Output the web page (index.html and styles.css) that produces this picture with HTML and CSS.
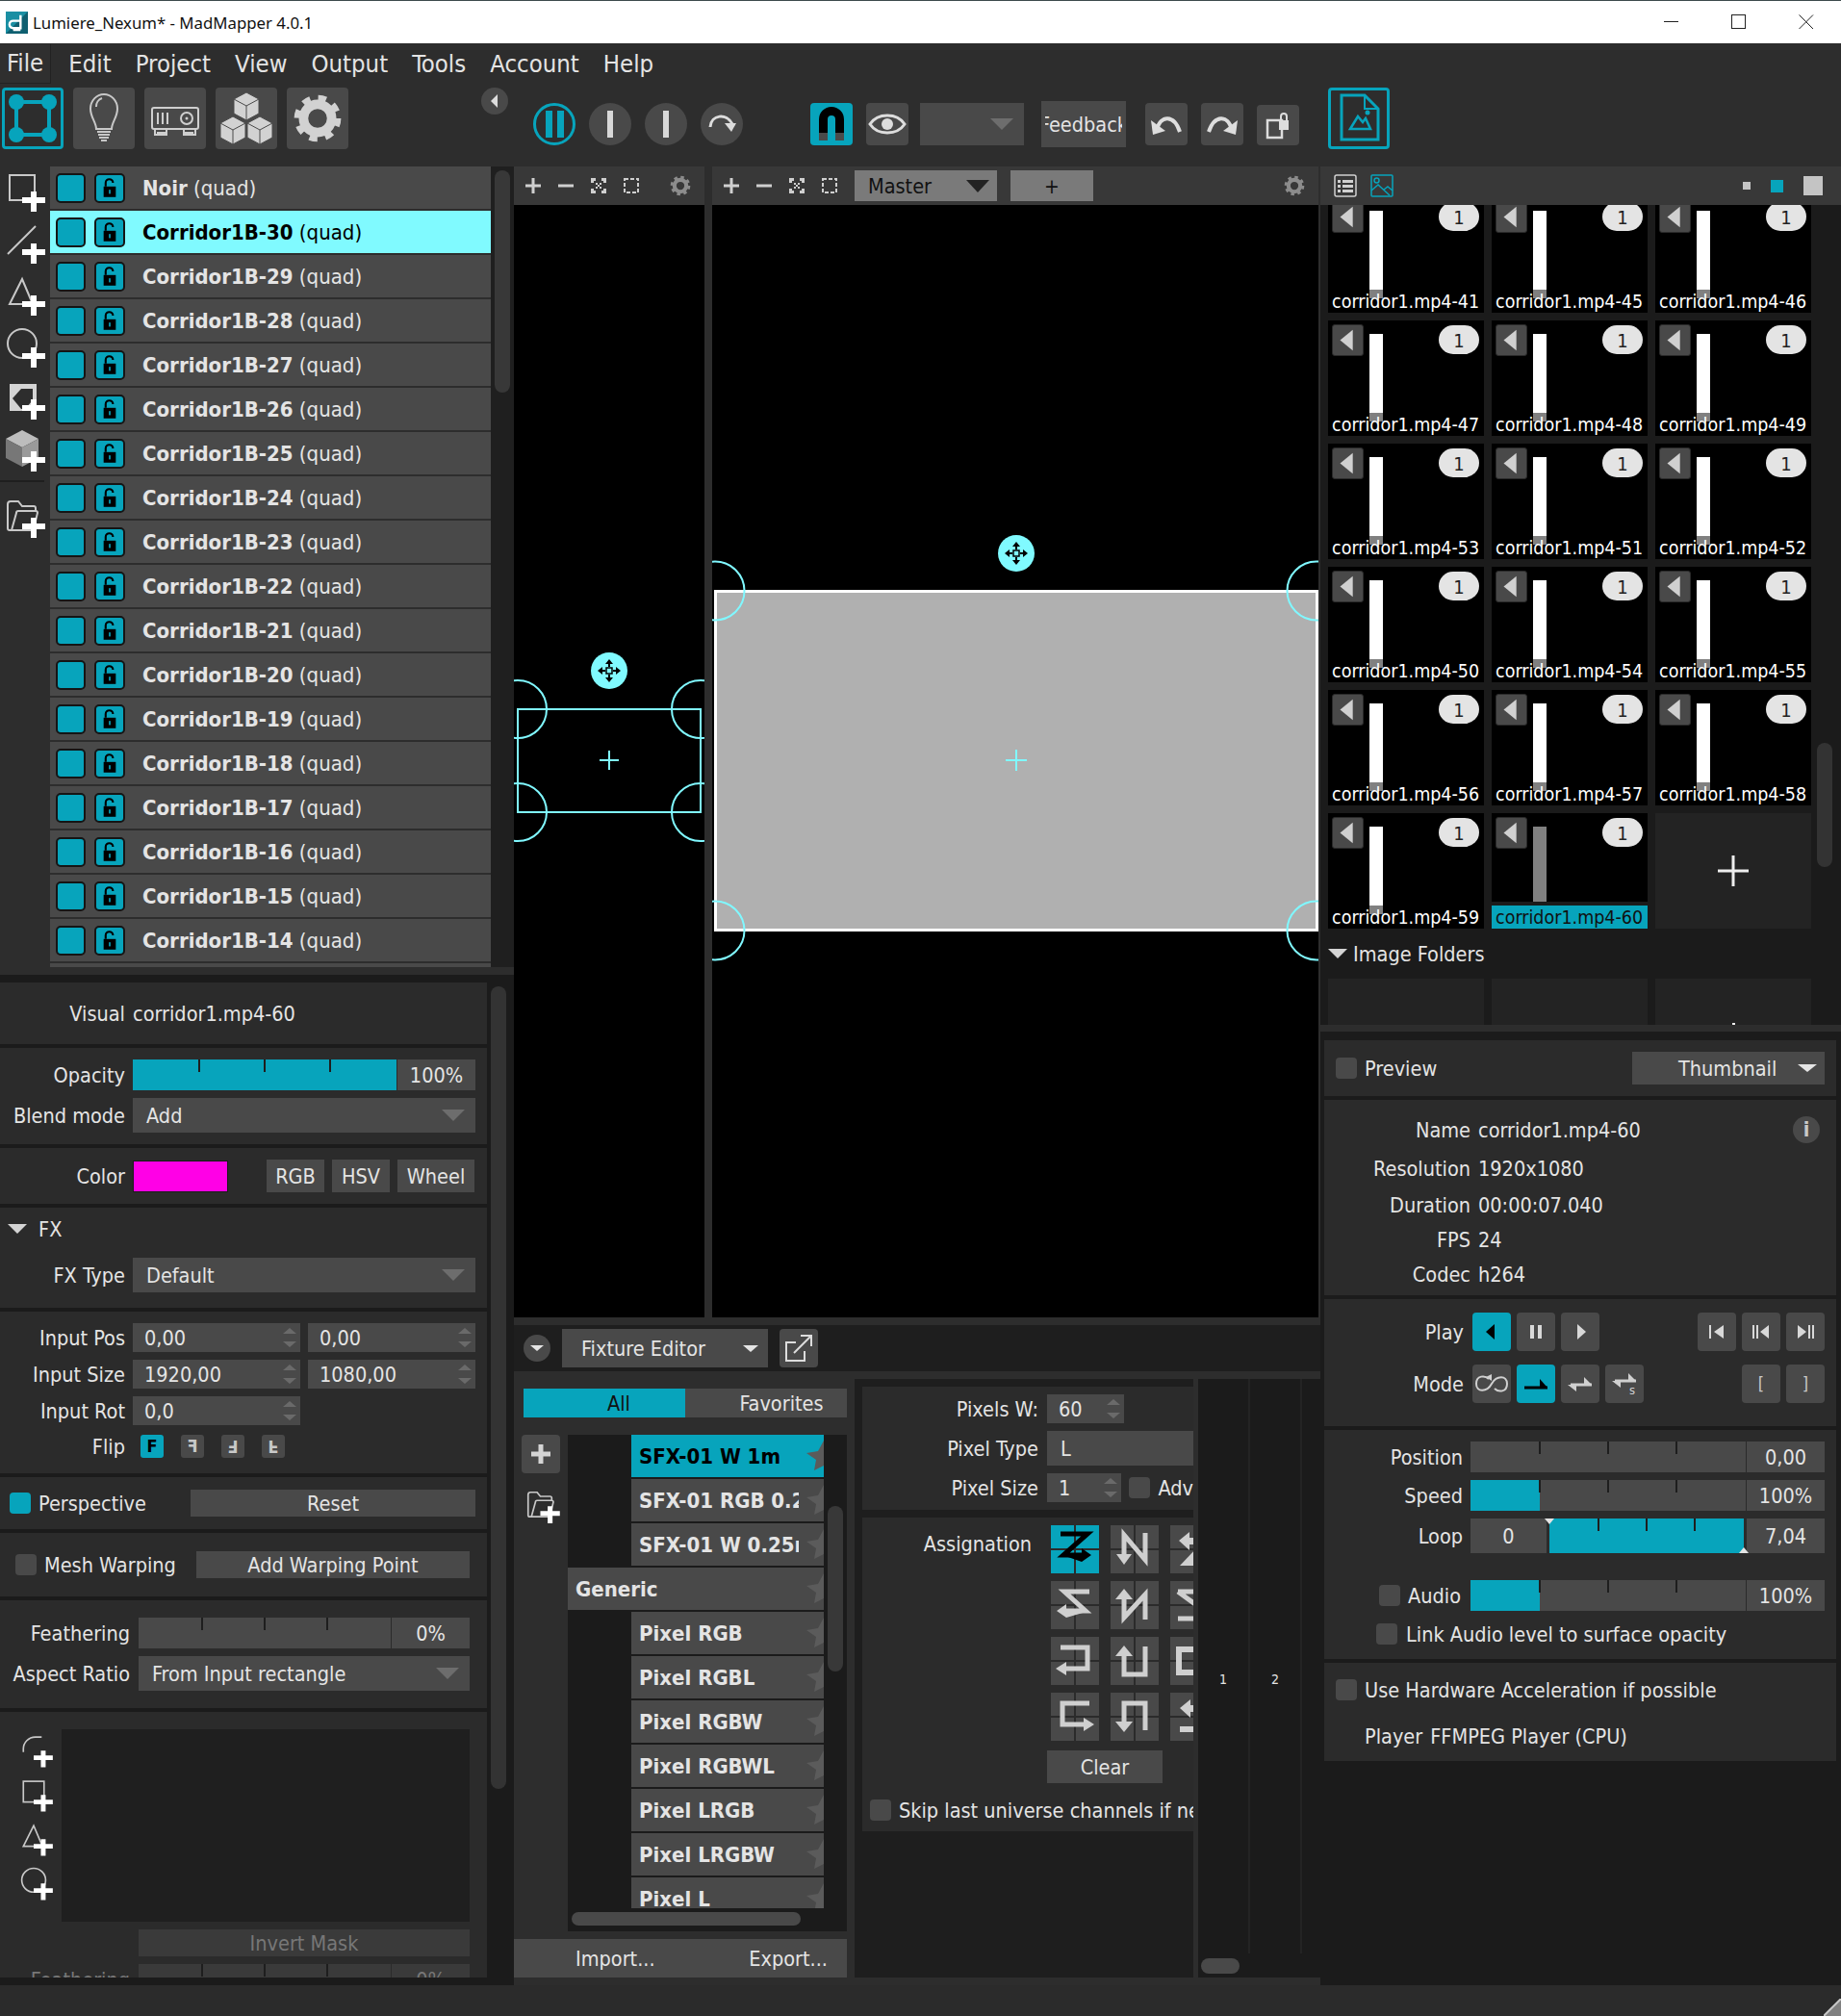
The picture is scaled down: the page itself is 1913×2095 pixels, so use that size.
FILE: index.html
```html
<!DOCTYPE html>
<html>

<head>
  <title>Lumiere_Nexum* - MadMapper 4.0.1</title>
  <link rel="stylesheet" href="styles.css">
</head>

<body>
  <svg class="defs" xmlns="http://www.w3.org/2000/svg">
    <symbol id="plus" viewBox="0 0 52 54"><path d="M32 26h6v6h9v6h-9v9h-6v-9h-9v-6h9z" fill="#fff"/></symbol>
    <symbol id="t-quad" viewBox="0 0 52 54"><rect x="10" y="9" width="26" height="26" fill="none" stroke="#c8c8c8" stroke-width="2"/><use href="#plus" width="52" height="54"/></symbol>
    <symbol id="t-line" viewBox="0 0 52 54"><path d="M8 37L37 8" stroke="#c8c8c8" stroke-width="2"/><use href="#plus" width="52" height="54"/></symbol>
    <symbol id="t-tri" viewBox="0 0 52 54"><path d="M23 9L10 35H34z" fill="none" stroke="#c8c8c8" stroke-width="2"/><use href="#plus" width="52" height="54"/></symbol>
    <symbol id="t-circle" viewBox="0 0 52 54"><circle cx="23" cy="22" r="15" fill="none" stroke="#c8c8c8" stroke-width="2"/><use href="#plus" width="52" height="54"/></symbol>
    <symbol id="t-poly" viewBox="0 0 52 54"><path d="M10 10H38V38H10z" fill="#d4d4d4"/><path d="M13 25L22 15H34V27L26 36H22z" fill="#2d2d2d"/><use href="#plus" width="52" height="54"/></symbol>
    <symbol id="t-cube" viewBox="0 0 52 54"><path d="M23 4L40 13 23 22 6 13z" fill="#bdbdbd"/><path d="M6 13L23 22V42L6 33z" fill="#777"/><path d="M40 13L23 22V42L40 33z" fill="#9a9a9a"/><use href="#plus" width="52" height="54"/></symbol>
    <symbol id="t-folder" viewBox="0 0 52 54"><path d="M12 39H10a2 2 0 0 1-2-2V12a3 3 0 0 1 3-3h8l4 5h12a2 2 0 0 1 2 2v3M12 39L17 21a2 2 0 0 1 2-2h18a2 2 0 0 1 2 2l-4 16a2 2 0 0 1-2 2z" fill="none" stroke="#c8c8c8" stroke-width="2"/><use href="#plus" width="52" height="54"/></symbol>
    <symbol id="t-curve" viewBox="0 0 52 54"><path d="M10 28V24A15 15 0 0 1 25 9H33" fill="none" stroke="#c8c8c8" stroke-width="2"/><use href="#plus" width="52" height="54"/></symbol>
    <symbol id="lock" viewBox="0 0 32 32"><rect x="8.500" y="14" width="15" height="13" fill="#000"/><path d="M11 14V9.500a4.500 4.500 0 0 1 9 0" fill="none" stroke="#000" stroke-width="2.500"/><rect x="15" y="18" width="2" height="5" fill="#07a4bc"/></symbol>
    <symbol id="gear" viewBox="0 0 48 48"><circle cx="24" cy="24" r="19" fill="none" stroke="currentColor" stroke-width="7" stroke-dasharray="7.460 7.460"/><circle cx="24" cy="24" r="13.500" fill="none" stroke="currentColor" stroke-width="9"/></symbol>
    <symbol id="fit" viewBox="0 0 16 16"><path d="M0 0h5v3H3v2H0zM11 0h5v5h-3V3h-2zM0 11h3v2h2v3H0zM13 11h3v5h-5v-3h2zM5 5h2v2H5zM9 5h2v2H9zM7 7h2v2H7zM5 9h2v2H5zM9 9h2v2H9z" fill="#cfcfcf"/></symbol>
    <symbol id="dash" viewBox="0 0 16 16"><rect x="1" y="1" width="14" height="14" fill="none" stroke="#cfcfcf" stroke-width="2" stroke-dasharray="4 2"/></symbol>
    <symbol id="updown" viewBox="0 0 14 24"><path d="M0 8L7 2l7 6zM0 16l7 6 7-6z" fill="#6a6a6a"/></symbol>
    <symbol id="back" viewBox="0 0 33 33"><path d="M8 16.500L22 5v23z" fill="#d0d0d0"/></symbol>
    <symbol id="star" viewBox="0 0 18 32"><path d="M18 0V26L8 31 10 20 0 13l12-2z" fill="#5b5b5b"/></symbol>
    <symbol id="a1" viewBox="0 0 50 50"><path d="M10 9H38L13 31H36" fill="none" stroke="currentColor" stroke-width="5"/><path d="M12 31H32V24L42 31 32 38z" fill="currentColor"/></symbol>
    <symbol id="a2" viewBox="0 0 50 50"><path d="M14 34V10L36 36V8" fill="none" stroke="currentColor" stroke-width="5"/><path d="M6 30H22L14 41z" fill="currentColor"/></symbol>
    <symbol id="a3" viewBox="0 0 50 50"><path d="M40 11H14L36 31H12" fill="none" stroke="currentColor" stroke-width="5"/><path d="M40 31H16V24L6 31 16 38z" fill="currentColor"/></symbol>
    <symbol id="a4" viewBox="0 0 50 50"><path d="M14 16V38L36 14V40" fill="none" stroke="currentColor" stroke-width="5"/><path d="M5 19H23L14 8z" fill="currentColor"/></symbol>
    <symbol id="a5" viewBox="0 0 50 50"><path d="M10 11H38V33H14" fill="none" stroke="currentColor" stroke-width="5"/><path d="M16 26V40L5 33z" fill="currentColor"/></symbol>
    <symbol id="a6" viewBox="0 0 50 50"><path d="M14 17V39H36V10" fill="none" stroke="currentColor" stroke-width="5"/><path d="M5 20H23L14 9z" fill="currentColor"/></symbol>
    <symbol id="a7" viewBox="0 0 50 50"><path d="M40 11H12V33H36" fill="none" stroke="currentColor" stroke-width="5"/><path d="M34 26V40L45 33z" fill="currentColor"/></symbol>
    <symbol id="a8" viewBox="0 0 50 50"><path d="M14 33V11H36V39" fill="none" stroke="currentColor" stroke-width="5"/><path d="M5 30H23L14 41z" fill="currentColor"/></symbol>
    <symbol id="a9" viewBox="0 0 50 50"><path d="M9 16L20 7V13H40V20H20V26z" fill="currentColor"/><path d="M10 42L26 25V42z" fill="currentColor"/></symbol>
    <symbol id="a10" viewBox="0 0 50 50"><path d="M8 11H50M8 11L34 30M8 39H50" fill="none" stroke="currentColor" stroke-width="5"/></symbol>
    <symbol id="a11" viewBox="0 0 50 50"><path d="M42 13H9V37H42" fill="none" stroke="currentColor" stroke-width="6"/></symbol>
    <symbol id="a12" viewBox="0 0 50 50"><path d="M10 16L21 7V13H40V20H21V26z" fill="currentColor"/><rect x="10" y="35" width="36" height="6" fill="currentColor"/></symbol>
    <symbol id="move" viewBox="0 0 24 24"><path d="M12 0l4 5h-3v3h-2V5H8zM12 24l-4-5h3v-3h2v3h3zM0 12l5-4v3h3v2H5v3zM24 12l-5 4v-3h-3v-2h3V8z" fill="#000"/><rect x="9" y="9" width="6" height="6" fill="none" stroke="#000" stroke-width="1.500"/></symbol>
  </svg>

  <div class="window">
    <header class="titlebar">
      <svg class="app-icon" viewBox="0 0 24 24"><rect width="24" height="24" fill="#0e5f70"/><path d="M0 24V0h24L0 24z" fill="#1a8fa3"/><path d="M16 4v14h-8a4 4 0 0 1 0-8h8M8 20h8" fill="none" stroke="#fff" stroke-width="2.500"/></svg>
      <span class="app-title">Lumiere_Nexum* - MadMapper 4.0.1</span>
      <div class="win-controls">
        <svg width="16" height="16" viewBox="0 0 16 16"><path d="M0 7.500H15" stroke="#222"/></svg>
        <svg width="16" height="16" viewBox="0 0 16 16"><rect x="0.500" y="0.500" width="14" height="14" fill="none" stroke="#222"/></svg>
        <svg width="16" height="16" viewBox="0 0 16 16"><path d="M0.500 0.500L15 15M15 0.500L0.500 15" stroke="#222"/></svg>
      </div>
    </header>

    <nav class="menubar">
      <span class="menu-item menu-file">File</span>
      <span class="menu-item">Edit</span>
      <span class="menu-item">Project</span>
      <span class="menu-item">View</span>
      <span class="menu-item">Output</span>
      <span class="menu-item">Tools</span>
      <span class="menu-item">Account</span>
      <span class="menu-item">Help</span>
    </nav>

    <div class="toolbar">
      <div class="tool-modes">
        <button class="mode-btn mode-on">
          <svg viewBox="0 0 58 58" width="58" height="58"><path d="M12 12H46V46H12z" fill="none" stroke="#07a4bc" stroke-width="4"/><circle cx="12" cy="12" r="8" fill="#07a4bc"/><circle cx="46" cy="12" r="8" fill="#07a4bc"/><circle cx="12" cy="46" r="8" fill="#07a4bc"/><circle cx="46" cy="46" r="8" fill="#07a4bc"/></svg>
        </button>
        <button class="mode-btn">
          <svg viewBox="0 0 64 64" width="64" height="64"><path d="M24 43C24 36 18 31 18 22A14 15 0 0 1 46 22C46 31 40 36 40 43z" fill="none" stroke="#c8c8c8" stroke-width="2"/><path d="M25 46H39M26 49H38M27 52H37M29 55H35" stroke="#c8c8c8" stroke-width="2"/><path d="M24 20a9 9 0 0 1 6-9" fill="none" stroke="#c8c8c8" stroke-width="2"/></svg>
        </button>
        <button class="mode-btn">
          <svg viewBox="0 0 64 64" width="64" height="64"><rect x="8" y="21" width="48" height="22" rx="2" fill="none" stroke="#cfcfcf" stroke-width="2"/><path d="M13 47H22M42 47H51M11 43v6h12v-6M41 43v6h12v-6" fill="none" stroke="#cfcfcf" stroke-width="2"/><path d="M14 26V38M19 26V38M24 26V38" stroke="#cfcfcf" stroke-width="2"/><circle cx="44" cy="32" r="6" fill="none" stroke="#cfcfcf" stroke-width="2"/><circle cx="44" cy="32" r="1.500" fill="#cfcfcf"/></svg>
        </button>
        <button class="mode-btn">
          <svg viewBox="0 0 64 64" width="64" height="64"><g fill="#d2d2d2" stroke="#4a4a4a" stroke-width="1"><path d="M32 5L45 12V27L32 34 19 27V12z"/><path d="M18 30L31 37V52L18 59 5 52V37z"/><path d="M46 30L59 37V52L46 59 33 52V37z"/></g><path d="M19 12L32 19 45 12M32 19V34M5 37L18 44 31 37M18 44V59M33 37L46 44 59 37M46 44V59" fill="none" stroke="#4a4a4a" stroke-width="1"/></svg>
        </button>
        <button class="mode-btn">
          <svg class="gear-large" viewBox="0 0 48 48" width="52" height="52"><use href="#gear" width="48" height="48"/></svg>
        </button>
      </div>

      <button class="collapse-btn"><svg viewBox="0 0 8 14" width="8" height="14"><path d="M7 0V14L0 7z" fill="#ddd"/></svg></button>

      <div class="transport">
        <button class="round-btn round-on"><span class="bar bar-teal"></span><span class="bar bar-teal"></span></button>
        <button class="round-btn"><span class="bar"></span></button>
        <button class="round-btn"><span class="bar"></span></button>
        <button class="round-btn">
          <svg viewBox="0 0 32 32" width="32" height="32"><path d="M4 19C5 6 21 4 27 16" fill="none" stroke="#ddd" stroke-width="3"/><path d="M19 15H31L26 24z" fill="#ddd"/></svg>
        </button>
      </div>

      <button class="square-btn square-on magnet-btn">
        <svg viewBox="0 0 32 38" width="32" height="38"><path d="M3 28V14a13 13 0 0 1 26 0V28H20V14a4 4 0 0 0-8 0V28z" fill="#000"/><path d="M3 28H12V36H3zM20 28H29V36H20z" fill="#4a4a4a"/></svg>
      </button>
      <button class="square-btn eye-btn">
        <svg viewBox="0 0 40 28" width="40" height="28"><path d="M2 14C10 2 30 2 38 14 30 26 10 26 2 14z" fill="none" stroke="#ddd" stroke-width="3"/><circle cx="20" cy="14" r="6" fill="#ddd"/></svg>
      </button>
      <div class="blank-combo"><i class="caret caret-big"></i></div>
      <div class="feedback-btn"><span>Feedback</span></div>
      <button class="square-btn undo-btn">
        <svg viewBox="0 0 36 28" width="36" height="28"><path d="M8 20C12 4 26 4 32 22" fill="none" stroke="#ddd" stroke-width="4"/><path d="M2 10L4 25 17 21z" fill="#ddd"/></svg>
      </button>
      <button class="square-btn redo-btn">
        <svg viewBox="0 0 36 28" width="36" height="28"><path d="M4 22C10 4 24 4 28 20" fill="none" stroke="#ddd" stroke-width="4"/><path d="M34 10L32 25 19 21z" fill="#ddd"/></svg>
      </button>
      <button class="square-btn lock-copy-btn">
        <svg viewBox="0 0 32 32" width="32" height="32"><rect x="5" y="11" width="15" height="18" fill="none" stroke="#ddd" stroke-width="2.500"/><rect x="17" y="11" width="10" height="10" fill="#ddd"/><path d="M19 11V7a3 3 0 0 1 6 0v4" fill="none" stroke="#ddd" stroke-width="2"/></svg>
      </button>
      <button class="mode-btn mode-on media-btn">
        <svg viewBox="0 0 48 58" width="48" height="58"><path d="M6 5H30L44 19V51H6z" fill="none" stroke="#07a4bc" stroke-width="3"/><path d="M30 5V19H44" fill="none" stroke="#07a4bc" stroke-width="2"/><path d="M15 40L23 27 28 33 31 29 36 40z" fill="none" stroke="#07a4bc" stroke-width="2.500"/><circle cx="33" cy="23" r="2.500" fill="#07a4bc"/></svg>
      </button>
    </div>

    <main class="main">
      <aside class="col-left">
        <div class="surfaces">
          <div class="rail">
            <svg class="rail-icon"><use href="#t-quad"/></svg>
            <svg class="rail-icon"><use href="#t-line"/></svg>
            <svg class="rail-icon"><use href="#t-tri"/></svg>
            <svg class="rail-icon"><use href="#t-circle"/></svg>
            <svg class="rail-icon"><use href="#t-poly"/></svg>
            <svg class="rail-icon"><use href="#t-cube"/></svg>
            <hr class="rail-sep">
            <svg class="rail-icon"><use href="#t-folder"/></svg>
          </div>
          <div class="surface-list">
            <div class="surface"><i class="swatch"></i><i class="swatch lockbox"><svg viewBox="0 0 32 32"><use href="#lock"/></svg></i><span class="surface-name"><b>Noir</b> (quad)</span></div>
            <div class="surface surface-on"><i class="swatch"></i><i class="swatch lockbox"><svg viewBox="0 0 32 32"><use href="#lock"/></svg></i><span class="surface-name"><b>Corridor1B-30</b> (quad)</span></div>
            <div class="surface"><i class="swatch"></i><i class="swatch lockbox"><svg viewBox="0 0 32 32"><use href="#lock"/></svg></i><span class="surface-name"><b>Corridor1B-29</b> (quad)</span></div>
            <div class="surface"><i class="swatch"></i><i class="swatch lockbox"><svg viewBox="0 0 32 32"><use href="#lock"/></svg></i><span class="surface-name"><b>Corridor1B-28</b> (quad)</span></div>
            <div class="surface"><i class="swatch"></i><i class="swatch lockbox"><svg viewBox="0 0 32 32"><use href="#lock"/></svg></i><span class="surface-name"><b>Corridor1B-27</b> (quad)</span></div>
            <div class="surface"><i class="swatch"></i><i class="swatch lockbox"><svg viewBox="0 0 32 32"><use href="#lock"/></svg></i><span class="surface-name"><b>Corridor1B-26</b> (quad)</span></div>
            <div class="surface"><i class="swatch"></i><i class="swatch lockbox"><svg viewBox="0 0 32 32"><use href="#lock"/></svg></i><span class="surface-name"><b>Corridor1B-25</b> (quad)</span></div>
            <div class="surface"><i class="swatch"></i><i class="swatch lockbox"><svg viewBox="0 0 32 32"><use href="#lock"/></svg></i><span class="surface-name"><b>Corridor1B-24</b> (quad)</span></div>
            <div class="surface"><i class="swatch"></i><i class="swatch lockbox"><svg viewBox="0 0 32 32"><use href="#lock"/></svg></i><span class="surface-name"><b>Corridor1B-23</b> (quad)</span></div>
            <div class="surface"><i class="swatch"></i><i class="swatch lockbox"><svg viewBox="0 0 32 32"><use href="#lock"/></svg></i><span class="surface-name"><b>Corridor1B-22</b> (quad)</span></div>
            <div class="surface"><i class="swatch"></i><i class="swatch lockbox"><svg viewBox="0 0 32 32"><use href="#lock"/></svg></i><span class="surface-name"><b>Corridor1B-21</b> (quad)</span></div>
            <div class="surface"><i class="swatch"></i><i class="swatch lockbox"><svg viewBox="0 0 32 32"><use href="#lock"/></svg></i><span class="surface-name"><b>Corridor1B-20</b> (quad)</span></div>
            <div class="surface"><i class="swatch"></i><i class="swatch lockbox"><svg viewBox="0 0 32 32"><use href="#lock"/></svg></i><span class="surface-name"><b>Corridor1B-19</b> (quad)</span></div>
            <div class="surface"><i class="swatch"></i><i class="swatch lockbox"><svg viewBox="0 0 32 32"><use href="#lock"/></svg></i><span class="surface-name"><b>Corridor1B-18</b> (quad)</span></div>
            <div class="surface"><i class="swatch"></i><i class="swatch lockbox"><svg viewBox="0 0 32 32"><use href="#lock"/></svg></i><span class="surface-name"><b>Corridor1B-17</b> (quad)</span></div>
            <div class="surface"><i class="swatch"></i><i class="swatch lockbox"><svg viewBox="0 0 32 32"><use href="#lock"/></svg></i><span class="surface-name"><b>Corridor1B-16</b> (quad)</span></div>
            <div class="surface"><i class="swatch"></i><i class="swatch lockbox"><svg viewBox="0 0 32 32"><use href="#lock"/></svg></i><span class="surface-name"><b>Corridor1B-15</b> (quad)</span></div>
            <div class="surface"><i class="swatch"></i><i class="swatch lockbox"><svg viewBox="0 0 32 32"><use href="#lock"/></svg></i><span class="surface-name"><b>Corridor1B-14</b> (quad)</span></div>
            <div class="surface"></div>
          </div>
          <div class="list-scroll"><i class="pill"></i></div>
        </div>
        <div class="left-strip"></div>

        <div class="inspector">
          <div class="sections">
            <section class="sec sec-visual">
              <div class="row"><span class="lbl">Visual</span><span>corridor1.mp4-60</span></div>
            </section>
            <section class="sec sec-blend">
              <div class="row">
                <span class="lbl">Opacity</span>
                <div class="slider"><div class="track"><i class="fill fill-full"></i></div><span class="val">100%</span></div>
              </div>
              <div class="row row-gap">
                <span class="lbl">Blend mode</span>
                <div class="combo"><span>Add</span><i class="caret"></i></div>
              </div>
            </section>
            <section class="sec sec-color">
              <div class="row">
                <span class="lbl">Color</span>
                <i class="color-chip"></i>
                <button class="flat-btn btn-rgb">RGB</button>
                <button class="flat-btn btn-hsv">HSV</button>
                <button class="flat-btn btn-wheel">Wheel</button>
              </div>
            </section>
            <section class="sec sec-fx">
              <div class="fold"><i class="fold-arrow"></i><span>FX</span></div>
              <div class="row row-fx">
                <span class="lbl">FX Type</span>
                <div class="combo"><span>Default</span><i class="caret"></i></div>
              </div>
            </section>
            <section class="sec sec-input">
              <div class="row">
                <span class="lbl">Input Pos</span>
                <div class="spin"><span>0,00</span><svg><use href="#updown"/></svg></div>
                <div class="spin"><span>0,00</span><svg><use href="#updown"/></svg></div>
              </div>
              <div class="row row-gap">
                <span class="lbl">Input Size</span>
                <div class="spin"><span>1920,00</span><svg><use href="#updown"/></svg></div>
                <div class="spin"><span>1080,00</span><svg><use href="#updown"/></svg></div>
              </div>
              <div class="row row-gap">
                <span class="lbl">Input Rot</span>
                <div class="spin spin-half"><span>0,0</span><svg><use href="#updown"/></svg></div>
              </div>
              <div class="row row-flip">
                <span class="lbl">Flip</span>
                <div class="flip-btns">
                  <button class="flip-btn flip-on">F</button>
                  <button class="flip-btn flip-x">F</button>
                  <button class="flip-btn flip-xy">F</button>
                  <button class="flip-btn flip-y">F</button>
                </div>
              </div>
            </section>
            <section class="sec sec-persp">
              <i class="check check-on"></i><span>Perspective</span>
              <button class="flat-btn btn-reset">Reset</button>
            </section>
            <section class="sec sec-mesh">
              <i class="check"></i><span>Mesh Warping</span>
              <button class="flat-btn btn-warp">Add Warping Point</button>
            </section>
            <section class="sec sec-feather">
              <div class="row">
                <span class="lbl">Feathering</span>
                <div class="slider"><div class="track"></div><span class="val">0%</span></div>
              </div>
              <div class="row row-gap">
                <span class="lbl">Aspect Ratio</span>
                <div class="combo"><span>From Input rectangle</span><i class="caret"></i></div>
              </div>
            </section>
            <section class="sec sec-mask">
              <div class="mask-top">
                <div class="mask-tools">
                  <svg class="mask-icon"><use href="#t-curve"/></svg>
                  <svg class="mask-icon"><use href="#t-quad"/></svg>
                  <svg class="mask-icon"><use href="#t-tri"/></svg>
                  <svg class="mask-icon"><use href="#t-circle"/></svg>
                </div>
                <div class="mask-box"></div>
              </div>
              <button class="flat-btn btn-invert">Invert Mask</button>
              <div class="row row-gap row-dim">
                <span class="lbl">Feathering</span>
                <div class="slider"><div class="track track-dim"></div><span class="val val-dim">0%</span></div>
              </div>
            </section>
          </div>
          <div class="inspector-scroll"><i class="pill"></i></div>
        </div>
      </aside>

      <section class="col-center">
        <div class="views">
          <div class="view view-a">
            <div class="view-head">
              <button class="vh-icon"><svg viewBox="0 0 16 16"><path d="M6.500 0h3v6.500H16v3H9.500V16h-3V9.500H0v-3h6.500z" fill="#cfcfcf"/></svg></button>
              <button class="vh-icon"><svg viewBox="0 0 16 16"><path d="M0 6.500h16v3H0z" fill="#cfcfcf"/></svg></button>
              <button class="vh-icon"><svg viewBox="0 0 16 16"><use href="#fit"/></svg></button>
              <button class="vh-icon"><svg viewBox="0 0 16 16"><use href="#dash"/></svg></button>
              <svg class="vh-gear"><use href="#gear"/></svg>
            </div>
            <svg class="canvas" viewBox="0 0 198 1156">
              <rect x="4" y="524" width="190" height="107" fill="none" stroke="#80f8ff" stroke-width="2"/>
              <g fill="none" stroke="#80f8ff" stroke-width="2">
                <circle cx="4" cy="524" r="30"/><circle cx="194" cy="524" r="30"/><circle cx="4" cy="631" r="30"/><circle cx="194" cy="631" r="30"/>
                <path d="M89 577H109M99 567V587"/>
              </g>
              <circle cx="99" cy="484" r="19" fill="#80faff"/>
              <svg x="87" y="472" width="24" height="24" viewBox="0 0 24 24"><use href="#move"/></svg>
            </svg>
          </div>
          <div class="view view-b">
            <div class="view-head">
              <button class="vh-icon"><svg viewBox="0 0 16 16"><path d="M6.500 0h3v6.500H16v3H9.500V16h-3V9.500H0v-3h6.500z" fill="#cfcfcf"/></svg></button>
              <button class="vh-icon"><svg viewBox="0 0 16 16"><path d="M0 6.500h16v3H0z" fill="#cfcfcf"/></svg></button>
              <button class="vh-icon"><svg viewBox="0 0 16 16"><use href="#fit"/></svg></button>
              <button class="vh-icon"><svg viewBox="0 0 16 16"><use href="#dash"/></svg></button>
              <div class="master"><span>Master</span><i class="caret caret-dark"></i></div>
              <button class="master-add">+</button>
              <svg class="vh-gear"><use href="#gear"/></svg>
            </div>
            <svg class="canvas" viewBox="0 0 630 1156">
              <rect x="3.500" y="401.500" width="625" height="352" fill="#b0b0b0" stroke="#fff" stroke-width="3"/>
              <g fill="none" stroke="#80f8ff" stroke-width="2">
                <circle cx="3" cy="401" r="30.500"/><circle cx="628" cy="401" r="30.500"/><circle cx="3" cy="754" r="30.500"/><circle cx="628" cy="754" r="30.500"/>
                <path d="M305 577H327M316 566V588"/>
              </g>
              <circle cx="316" cy="362" r="19" fill="#80faff"/>
              <svg x="304" y="350" width="24" height="24" viewBox="0 0 24 24"><use href="#move"/></svg>
            </svg>
          </div>
        </div>

        <div class="editor">
          <div class="editor-head">
            <button class="fold-btn"><i class="caret caret-white"></i></button>
            <div class="combo combo-editor"><span>Fixture Editor</span><i class="caret caret-white"></i></div>
            <button class="square-btn detach-btn">
              <svg viewBox="0 0 32 32" width="32" height="32"><path d="M22 19V29H3V10H13" fill="none" stroke="#ddd" stroke-width="2"/><path d="M11 21L28 4M18 3H29V14" fill="none" stroke="#ddd" stroke-width="2"/></svg>
            </button>
          </div>
          <div class="editor-body">
            <div class="fixtures">
              <div class="tabs"><span class="tab tab-on">All</span><span class="tab tab-fav">Favorites</span></div>
              <div class="fixture-main">
                <div class="fixture-side">
                  <button class="square-btn add-btn"><svg viewBox="0 0 20 20" width="20" height="20"><path d="M7.500 0h5v7.500H20v5h-7.500V20h-5v-7.500H0v-5h7.500z" fill="#d4d4d4"/></svg></button>
                  <svg class="folder-add"><use href="#t-folder"/></svg>
                </div>
                <div class="fixture-list">
                  <div class="fixture-rows">
                    <div class="fx-item fx-on"><span>SFX-01 W 1m</span><svg class="star"><use href="#star"/></svg></div>
                    <div class="fx-item"><span>SFX-01 RGB 0.25m</span><svg class="star"><use href="#star"/></svg></div>
                    <div class="fx-item"><span>SFX-01 W 0.25m</span><svg class="star"><use href="#star"/></svg></div>
                    <div class="fx-item fx-group"><span>Generic</span><svg class="star"><use href="#star"/></svg></div>
                    <div class="fx-item"><span>Pixel RGB</span><svg class="star"><use href="#star"/></svg></div>
                    <div class="fx-item"><span>Pixel RGBL</span><svg class="star"><use href="#star"/></svg></div>
                    <div class="fx-item"><span>Pixel RGBW</span><svg class="star"><use href="#star"/></svg></div>
                    <div class="fx-item"><span>Pixel RGBWL</span><svg class="star"><use href="#star"/></svg></div>
                    <div class="fx-item"><span>Pixel LRGB</span><svg class="star"><use href="#star"/></svg></div>
                    <div class="fx-item"><span>Pixel LRGBW</span><svg class="star"><use href="#star"/></svg></div>
                    <div class="fx-item"><span>Pixel L</span><svg class="star"><use href="#star"/></svg></div>
                  </div>
                  <div class="fixture-vscroll"><i class="pill"></i></div>
                  <div class="fixture-hscroll"><i class="pill"></i></div>
                </div>
              </div>
              <div class="import-bar"><span class="import">Import...</span><span class="export">Export...</span></div>
            </div>

            <div class="fixture-props">
              <section class="prop-sec prop-pixels">
                <div class="prop-row"><span class="prop-lbl">Pixels W:</span><div class="spin spin-small"><span>60</span><svg><use href="#updown"/></svg></div></div>
                <div class="prop-row prop-type"><span class="prop-lbl">Pixel Type</span><div class="combo combo-type"><span>L</span></div></div>
                <div class="prop-row prop-size"><span class="prop-lbl">Pixel Size</span><div class="spin spin-small"><span>1</span><svg><use href="#updown"/></svg></div><i class="check"></i><span>Adv</span></div>
              </section>
              <section class="prop-sec prop-assign">
                <div class="assign">
                  <span class="prop-lbl assign-lbl">Assignation</span>
                  <div class="assign-grid">
                    <button class="assign-btn assign-on"><svg viewBox="0 0 50 50"><use href="#a1"/></svg></button>
                    <button class="assign-btn"><svg viewBox="0 0 50 50"><use href="#a2"/></svg></button>
                    <button class="assign-btn"><svg viewBox="0 0 50 50"><use href="#a9"/></svg></button>
                    <button class="assign-btn"><svg viewBox="0 0 50 50"><use href="#a3"/></svg></button>
                    <button class="assign-btn"><svg viewBox="0 0 50 50"><use href="#a4"/></svg></button>
                    <button class="assign-btn"><svg viewBox="0 0 50 50"><use href="#a10"/></svg></button>
                    <button class="assign-btn"><svg viewBox="0 0 50 50"><use href="#a5"/></svg></button>
                    <button class="assign-btn"><svg viewBox="0 0 50 50"><use href="#a6"/></svg></button>
                    <button class="assign-btn"><svg viewBox="0 0 50 50"><use href="#a11"/></svg></button>
                    <button class="assign-btn"><svg viewBox="0 0 50 50"><use href="#a7"/></svg></button>
                    <button class="assign-btn"><svg viewBox="0 0 50 50"><use href="#a8"/></svg></button>
                    <button class="assign-btn"><svg viewBox="0 0 50 50"><use href="#a12"/></svg></button>
                  </div>
                </div>
                <button class="flat-btn btn-clear">Clear</button>
                <div class="skip-row"><i class="check"></i><span>Skip last universe channels if needed</span></div>
              </section>
            </div>

            <div class="universes">
              <div class="universe-cols">
                <div class="universe">1</div>
                <div class="universe">2</div>
                <div class="universe universe-last"></div>
              </div>
              <div class="universe-scroll"><i class="pill"></i></div>
            </div>
          </div>
        </div>
      </section>

      <aside class="col-right">
        <div class="media">
          <div class="media-head">
            <svg viewBox="0 0 24 24" width="24" height="24"><rect x="1" y="1" width="22" height="22" rx="2" fill="none" stroke="#d0d0d0" stroke-width="1.500"/><path d="M4 6h3v3H4zM9 6h11v3H9zM4 11h3v3H4zM9 11h11v3H9zM4 16h3v3H4zM9 16h11v3H9z" fill="#d0d0d0"/></svg>
            <svg viewBox="0 0 24 24" width="24" height="24"><rect x="1" y="1" width="22" height="22" rx="1" fill="none" stroke="#07a4bc" stroke-width="1.500"/><circle cx="6.500" cy="6.500" r="2.500" fill="none" stroke="#07a4bc" stroke-width="1.500"/><path d="M1 17L8 11 20 22M14 16L18 13 23 17" fill="none" stroke="#07a4bc" stroke-width="1.500"/></svg>
            <i class="size-chip size-s"></i>
            <i class="size-chip size-m"></i>
            <i class="size-chip size-l"></i>
          </div>
          <div class="media-body">
            <div class="media-scroll-area">
              <div class="thumbs">
                <div class="thumb"><div class="thumb-top"><span class="thumb-back"><svg viewBox="0 0 33 33"><use href="#back"/></svg></span><span class="thumb-bar"></span><span class="thumb-count">1</span></div><span class="thumb-label">corridor1.mp4-41</span></div>
                <div class="thumb"><div class="thumb-top"><span class="thumb-back"><svg viewBox="0 0 33 33"><use href="#back"/></svg></span><span class="thumb-bar"></span><span class="thumb-count">1</span></div><span class="thumb-label">corridor1.mp4-45</span></div>
                <div class="thumb"><div class="thumb-top"><span class="thumb-back"><svg viewBox="0 0 33 33"><use href="#back"/></svg></span><span class="thumb-bar"></span><span class="thumb-count">1</span></div><span class="thumb-label">corridor1.mp4-46</span></div>
                <div class="thumb"><div class="thumb-top"><span class="thumb-back"><svg viewBox="0 0 33 33"><use href="#back"/></svg></span><span class="thumb-bar"></span><span class="thumb-count">1</span></div><span class="thumb-label">corridor1.mp4-47</span></div>
                <div class="thumb"><div class="thumb-top"><span class="thumb-back"><svg viewBox="0 0 33 33"><use href="#back"/></svg></span><span class="thumb-bar"></span><span class="thumb-count">1</span></div><span class="thumb-label">corridor1.mp4-48</span></div>
                <div class="thumb"><div class="thumb-top"><span class="thumb-back"><svg viewBox="0 0 33 33"><use href="#back"/></svg></span><span class="thumb-bar"></span><span class="thumb-count">1</span></div><span class="thumb-label">corridor1.mp4-49</span></div>
                <div class="thumb"><div class="thumb-top"><span class="thumb-back"><svg viewBox="0 0 33 33"><use href="#back"/></svg></span><span class="thumb-bar"></span><span class="thumb-count">1</span></div><span class="thumb-label">corridor1.mp4-53</span></div>
                <div class="thumb"><div class="thumb-top"><span class="thumb-back"><svg viewBox="0 0 33 33"><use href="#back"/></svg></span><span class="thumb-bar"></span><span class="thumb-count">1</span></div><span class="thumb-label">corridor1.mp4-51</span></div>
                <div class="thumb"><div class="thumb-top"><span class="thumb-back"><svg viewBox="0 0 33 33"><use href="#back"/></svg></span><span class="thumb-bar"></span><span class="thumb-count">1</span></div><span class="thumb-label">corridor1.mp4-52</span></div>
                <div class="thumb"><div class="thumb-top"><span class="thumb-back"><svg viewBox="0 0 33 33"><use href="#back"/></svg></span><span class="thumb-bar"></span><span class="thumb-count">1</span></div><span class="thumb-label">corridor1.mp4-50</span></div>
                <div class="thumb"><div class="thumb-top"><span class="thumb-back"><svg viewBox="0 0 33 33"><use href="#back"/></svg></span><span class="thumb-bar"></span><span class="thumb-count">1</span></div><span class="thumb-label">corridor1.mp4-54</span></div>
                <div class="thumb"><div class="thumb-top"><span class="thumb-back"><svg viewBox="0 0 33 33"><use href="#back"/></svg></span><span class="thumb-bar"></span><span class="thumb-count">1</span></div><span class="thumb-label">corridor1.mp4-55</span></div>
                <div class="thumb"><div class="thumb-top"><span class="thumb-back"><svg viewBox="0 0 33 33"><use href="#back"/></svg></span><span class="thumb-bar"></span><span class="thumb-count">1</span></div><span class="thumb-label">corridor1.mp4-56</span></div>
                <div class="thumb"><div class="thumb-top"><span class="thumb-back"><svg viewBox="0 0 33 33"><use href="#back"/></svg></span><span class="thumb-bar"></span><span class="thumb-count">1</span></div><span class="thumb-label">corridor1.mp4-57</span></div>
                <div class="thumb"><div class="thumb-top"><span class="thumb-back"><svg viewBox="0 0 33 33"><use href="#back"/></svg></span><span class="thumb-bar"></span><span class="thumb-count">1</span></div><span class="thumb-label">corridor1.mp4-58</span></div>
                <div class="thumb"><div class="thumb-top"><span class="thumb-back"><svg viewBox="0 0 33 33"><use href="#back"/></svg></span><span class="thumb-bar"></span><span class="thumb-count">1</span></div><span class="thumb-label">corridor1.mp4-59</span></div>
                <div class="thumb thumb-on"><div class="thumb-top"><span class="thumb-back"><svg viewBox="0 0 33 33"><use href="#back"/></svg></span><span class="thumb-bar"></span><span class="thumb-count">1</span></div><span class="thumb-label">corridor1.mp4-60</span></div>
                <div class="thumb thumb-add"><svg viewBox="0 0 32 32" width="32" height="32"><path d="M14.500 0h3v14.500H32v3H17.500V32h-3V17.500H0v-3h14.500z" fill="#eee"/></svg></div>
              </div>
              <div class="fold fold-images"><i class="fold-arrow"></i><span>Image Folders</span></div>
              <div class="folders"><i></i><i></i><i class="folder-last"></i></div>
            </div>
            <div class="media-scroll"><i class="pill"></i></div>
          </div>
        </div>
        <div class="media-strip"></div>

        <div class="props">
          <section class="sec pv-sec">
            <i class="check"></i><span>Preview</span>
            <div class="combo combo-thumb"><span>Thumbnail</span><i class="caret caret-white"></i></div>
          </section>
          <section class="sec info-sec">
            <div class="info-row"><span class="lbl">Name</span><span>corridor1.mp4-60</span><i class="info-btn">i</i></div>
            <div class="info-row info-res"><span class="lbl">Resolution</span><span>1920x1080</span></div>
            <div class="info-row"><span class="lbl">Duration</span><span>00:00:07.040</span></div>
            <div class="info-row"><span class="lbl">FPS</span><span>24</span></div>
            <div class="info-row"><span class="lbl">Codec</span><span>h264</span></div>
          </section>
          <section class="sec play-sec">
            <div class="row">
              <span class="lbl">Play</span>
              <button class="play-btn play-on"><svg viewBox="0 0 20 20" width="20" height="20"><path d="M13 2V18L4 10z" fill="#000"/></svg></button>
              <button class="play-btn"><svg viewBox="0 0 20 20" width="20" height="20"><path d="M4 3h4v14H4zM12 3h4v14h-4z" fill="#d8d8d8"/></svg></button>
              <button class="play-btn"><svg viewBox="0 0 20 20" width="20" height="20"><path d="M7 2V18L16 10z" fill="#d8d8d8"/></svg></button>
              <div class="play-right">
                <button class="play-btn"><svg viewBox="0 0 20 20" width="20" height="20"><path d="M2 3h2v14H2zM17 3V17L7 10z" fill="#d8d8d8"/></svg></button>
                <button class="play-btn"><svg viewBox="0 0 20 20" width="20" height="20"><path d="M1 3h2v14H1zM5 3h2v14H5zM18 3V17L9 10z" fill="#d8d8d8"/></svg></button>
                <button class="play-btn"><svg viewBox="0 0 20 20" width="20" height="20"><path d="M2 3V17L11 10zM13 3h2v14h-2zM17 3h2v14h-2z" fill="#d8d8d8"/></svg></button>
              </div>
            </div>
            <div class="row row-mode">
              <span class="lbl">Mode</span>
              <button class="play-btn"><svg viewBox="0 0 36 24" width="36" height="24"><path d="M15 7C11 3 2 3 2 12S13 21 18 12 34 3 34 12 25 21 21 17" fill="none" stroke="#d0d0d0" stroke-width="2"/><path d="M12 5l6-3v7z" fill="#d0d0d0"/></svg></button>
              <button class="play-btn play-on"><svg viewBox="0 0 28 20" width="28" height="20"><path d="M2 14H26" stroke="#000" stroke-width="3"/><path d="M18 14L18 5 26 14z" fill="#000"/></svg></button>
              <button class="play-btn"><svg viewBox="0 0 28 20" width="28" height="20"><path d="M4 11H26" stroke="#d0d0d0" stroke-width="3"/><path d="M18 11V3L26 11zM1 11H10V18z" fill="#d0d0d0"/></svg></button>
              <button class="play-btn"><svg viewBox="0 0 28 26" width="28" height="26"><path d="M4 10H26" stroke="#d0d0d0" stroke-width="3"/><path d="M18 10V2L26 10zM1 10H10V17z" fill="#d0d0d0"/><text x="19" y="24" font-size="13" fill="#d0d0d0">s</text></svg></button>
              <div class="play-right">
                <button class="play-btn bracket">[</button>
                <button class="play-btn bracket">]</button>
              </div>
            </div>
          </section>
          <section class="sec time-sec">
            <div class="row">
              <span class="lbl">Position</span>
              <div class="slider"><div class="track"></div><span class="val">0,00</span></div>
            </div>
            <div class="row row-gap">
              <span class="lbl">Speed</span>
              <div class="slider"><div class="track"><i class="fill fill-quarter"></i></div><span class="val">100%</span></div>
            </div>
            <div class="row row-gap row-loop">
              <span class="lbl">Loop</span>
              <div class="slider slider-loop"><span class="val val-start">0</span><div class="track"><i class="fill fill-full"></i><i class="loop-in"></i><i class="loop-out"></i></div><span class="val">7,04</span></div>
            </div>
            <div class="row row-audio">
              <div class="lbl"><i class="check"></i><span>Audio</span></div>
              <div class="slider"><div class="track"><i class="fill fill-quarter"></i></div><span class="val">100%</span></div>
            </div>
            <div class="link-row"><i class="check"></i><span>Link Audio level to surface opacity</span></div>
          </section>
          <section class="sec hw-sec">
            <div class="hw-row"><i class="check"></i><span>Use Hardware Acceleration if possible</span></div>
            <div class="player-row"><span>Player</span><span>FFMPEG Player (CPU)</span></div>
          </section>
        </div>
      </aside>
    </main>

    <footer class="statusbar">
      <svg viewBox="0 0 18 18" width="18" height="18"><path d="M18 0V18H0z" fill="#808080"/><path d="M18 0L0 18" stroke="#c8c8c8" stroke-width="2"/></svg>
    </footer>
  </div>
</body>

</html>
```

FILE: styles.css
```css
* {
  box-sizing: border-box;
}

body {
  margin: 0;
  background-color: #2b2b2b;
  color: #e4e4e4;
  font-family: "DejaVu Sans", sans-serif;
  font-stretch: condensed;
  font-size: 21.500px;
  line-height: 1;
}

button {
  font: inherit;
  color: inherit;
  border: none;
  padding: 0;
  background: none;
}

i {
  display: block;
  font-style: normal;
}

svg {
  display: block;
}

span,
.flat-btn,
.master-add {
  padding-top: 2px;
}

.defs {
  display: none;
}

.window {
  width: 1913px;
  height: 2095px;
  display: flex;
  flex-direction: column;
  overflow: hidden;
}

/* title bar */
.titlebar {
  height: 45px;
  flex: none;
  display: flex;
  align-items: center;
  background-color: #fff;
  border-top: 1px solid #3c4a4c;
  color: #111;
  font-family: "Noto Sans", sans-serif;
  font-stretch: normal;
  font-size: 16.800px;
}

.app-icon {
  width: 23px;
  height: 23px;
  margin-left: 6px;
}

.app-title {
  margin-left: 5px;
}

.win-controls {
  margin-left: auto;
  margin-right: 28px;
  display: flex;
  gap: 54px;
}

/* menu */
.menubar {
  height: 45px;
  flex: none;
  display: flex;
  align-items: center;
  gap: 25px;
  padding-left: 7px;
  background-color: #2d2d2d;
  font-size: 25.500px;
}

.menu-item {
  padding-top: 0;
  margin-bottom: 2px;
}

.menu-file {
  margin-left: -7px;
  padding: 7px 7px 8px;
  margin-right: -7px;
  background-color: #2f2f2f;
  border-right: 1px solid #222;
  border-bottom: 1px solid #222;
}

/* toolbar */
.toolbar {
  height: 83px;
  flex: none;
  display: flex;
  align-items: flex-start;
  padding-top: 1px;
  background-color: #2d2d2d;
}

.tool-modes {
  display: flex;
  gap: 10px;
  margin-left: 2px;
}

.mode-btn {
  width: 64px;
  height: 64px;
  display: flex;
  align-items: center;
  justify-content: center;
  background-color: #494949;
  border-radius: 4px;
}

.mode-on {
  background-color: #2d2d2d;
  border: 3px solid #07a4bc;
}

.gear-large {
  color: #d2d2d2;
}

.collapse-btn {
  width: 28px;
  height: 28px;
  margin-left: 138px;
  display: flex;
  align-items: center;
  justify-content: center;
  background-color: #494949;
  border-radius: 50%;
}

.transport {
  display: flex;
  gap: 14px;
  margin-left: 26px;
  margin-top: 16px;
}

.round-btn {
  width: 44px;
  height: 44px;
  display: flex;
  align-items: center;
  justify-content: center;
  gap: 5px;
  background-color: #494949;
  border-radius: 50%;
}

.round-on {
  background: none;
  border: 3px solid #07a4bc;
}

.bar {
  width: 6px;
  height: 28px;
  background-color: #d8d8d8;
}

.bar-teal {
  width: 7px;
  background-color: #07a4bc;
}

.square-btn {
  width: 44px;
  height: 44px;
  display: flex;
  align-items: center;
  justify-content: center;
  background-color: #494949;
  border-radius: 4px;
}

.square-on {
  background-color: #07a4bc;
}

.magnet-btn {
  margin-left: 70px;
  margin-top: 16px;
}

.eye-btn {
  margin-left: 14px;
  margin-top: 16px;
}

.blank-combo {
  width: 108px;
  height: 44px;
  margin-left: 12px;
  margin-top: 16px;
  padding-right: 11px;
  display: flex;
  align-items: center;
  justify-content: flex-end;
  background-color: #494949;
}

.feedback-btn {
  width: 88px;
  height: 48px;
  margin-left: 18px;
  margin-top: 14px;
  padding: 0 4px;
  background-color: #494949;
}

.feedback-btn span {
  height: 100%;
  display: flex;
  align-items: center;
  justify-content: center;
  overflow: hidden;
  font-size: 21.500px;
}

.undo-btn {
  margin-left: 20px;
  margin-top: 16px;
}

.redo-btn {
  margin-left: 14px;
  margin-top: 16px;
}

.lock-copy-btn {
  margin-left: 14px;
  margin-top: 18px;
  height: 42px;
}

.media-btn {
  margin-left: 30px;
}

/* carets */
.caret {
  width: 0;
  height: 0;
  margin-left: auto;
  border-left: 12px solid transparent;
  border-right: 12px solid transparent;
  border-top: 12px solid #6d6d6d;
}

.caret-big {
  margin-left: 0;
}

.caret-dark {
  border-top-color: #222;
  border-left-width: 12px;
  border-right-width: 12px;
  border-top-width: 13px;
}

.caret-white {
  border-left-width: 10px;
  border-right-width: 10px;
  border-top: 8px solid #e4e4e4;
}

/* main layout */
.main {
  flex: 1;
  min-height: 0;
  display: grid;
  grid-template-columns: 534px 838px 541px;
}

.col-left,
.col-center,
.col-right {
  min-height: 0;
  display: flex;
  flex-direction: column;
  overflow: hidden;
}

.pill {
  background-color: #383838;
  border-radius: 10px;
}

/* surfaces */
.surfaces {
  height: 832px;
  flex: none;
  display: flex;
  background-color: #2d2d2d;
}

.rail {
  width: 52px;
  flex: none;
}

.rail-icon {
  width: 52px;
  height: 54px;
}

.rail-sep {
  width: 46px;
  height: 2px;
  margin: 2px 0 11px;
  border: none;
  background-color: #1f1f1f;
}

.surface-list {
  width: 458px;
  flex: none;
  overflow: hidden;
}

.surface {
  height: 44px;
  margin-bottom: 2px;
  display: flex;
  align-items: center;
  background-color: #494949;
  padding-left: 6px;
}

.surface-on {
  background-color: #80faff;
  color: #000;
}

.swatch {
  width: 31px;
  height: 31px;
  flex: none;
  border: 2px solid #151515;
  border-radius: 5px;
  background-color: #07a4bc;
}

.lockbox {
  margin-left: 9px;
  width: 32px;
}

.lockbox svg {
  width: 28px;
  height: 27px;
}

.surface-name {
  margin-left: 18px;
  font-size: 22px;
}

.surface-name b {
  font-weight: bold;
}

.list-scroll {
  flex: 1;
  padding: 4px 4px 0;
  background-color: #1f1f1f;
}

.list-scroll .pill {
  height: 231px;
}

.left-strip {
  height: 16px;
  flex: none;
  background: linear-gradient(#2d2d2d 8px, #1b1b1b 8px);
}

/* inspector */
.inspector {
  flex: 1;
  min-height: 0;
  display: flex;
  background-color: #1b1b1b;
  padding-bottom: 8px;
}

.sections {
  width: 506px;
  flex: none;
  display: flex;
  flex-direction: column;
  gap: 4px;
  overflow: hidden;
}

.inspector-scroll {
  flex: 1;
  padding: 4px 8px 0 4px;
}

.inspector-scroll .pill {
  height: 834px;
  background-color: #333;
}

.sec {
  flex: none;
  background-color: #2b2b2b;
}

.row {
  display: flex;
  align-items: center;
  gap: 8px;
}

.row-gap {
  margin-top: 8px;
}

.lbl {
  width: 130px;
  flex: none;
  text-align: right;
}

.sec-visual {
  height: 64px;
  display: flex;
  align-items: center;
}

.sec-blend {
  height: 100px;
  padding: 12px 12px 0 0;
}

.sec-color {
  height: 58px;
  padding: 12px 12px 0 0;
}

.sec-fx {
  height: 104px;
  padding-right: 12px;
}

.fold {
  height: 44px;
  display: flex;
  align-items: center;
  gap: 12px;
  padding-left: 8px;
}

.fold-arrow {
  width: 0;
  height: 0;
  border-left: 10px solid transparent;
  border-right: 10px solid transparent;
  border-top: 10px solid #d4d4d4;
}

.row-fx {
  margin-top: 8px;
}

.sec-input {
  height: 168px;
  padding: 12px 12px 0 0;
}

.row-flip {
  margin-top: 10px;
}

.sec-persp {
  height: 54px;
  display: flex;
  align-items: center;
  gap: 8px;
  padding: 0 12px 0 10px;
}

.sec-mesh {
  height: 66px;
  display: flex;
  align-items: center;
  gap: 8px;
  padding: 0 18px 0 16px;
}

.sec-feather {
  height: 112px;
  padding: 18px 18px 0 0;
}

.sec-feather .lbl,
.sec-mask .lbl {
  width: 135px;
}

.sec-feather .row,
.sec-mask .row {
  gap: 9px;
}

.sec-mask {
  flex: 1;
  padding: 18px 18px 0 0;
}

/* controls */
.slider {
  flex: 1;
  height: 32px;
  display: flex;
  gap: 1px;
}

.track {
  position: relative;
  flex: 1;
  background-color: #494949;
}

.track::after {
  content: "";
  position: absolute;
  top: 0;
  left: 0;
  right: 0;
  height: 13px;
  background:
    linear-gradient(#1e1e1e, #1e1e1e) 25% 0 / 2px 100% no-repeat,
    linear-gradient(#1e1e1e, #1e1e1e) 50% 0 / 2px 100% no-repeat,
    linear-gradient(#1e1e1e, #1e1e1e) 75% 0 / 2px 100% no-repeat;
}

.track-dim {
  background-color: #3a3a3a;
}

.fill {
  height: 100%;
  background-color: #07a4bc;
}

.fill-full {
  width: 100%;
}

.fill-quarter {
  width: 25%;
}

.val {
  width: 81px;
  flex: none;
  display: flex;
  align-items: center;
  justify-content: center;
  background-color: #494949;
}

.val-dim {
  background-color: #3a3a3a;
  color: #777;
}

.combo {
  flex: 1;
  height: 36px;
  display: flex;
  align-items: center;
  padding: 0 11px 0 14px;
  background-color: #494949;
}

.color-chip {
  width: 99px;
  height: 33px;
  background-color: #ff00e6;
  border: 1px solid #1b1b1b;
}

.flat-btn {
  display: flex;
  align-items: center;
  justify-content: center;
  background-color: #494949;
}

.btn-rgb {
  width: 60px;
  height: 34px;
  margin-left: 32px;
}

.btn-hsv {
  width: 60px;
  height: 34px;
}

.btn-wheel {
  width: 80px;
  height: 34px;
}

.spin {
  width: 174px;
  height: 30px;
  display: flex;
  align-items: center;
  justify-content: space-between;
  padding: 0 4px 0 12px;
  background-color: #494949;
}

.spin svg {
  width: 14px;
  height: 24px;
}

.flip-btns {
  display: flex;
  gap: 18px;
  margin-left: 8px;
}

.flip-btn {
  width: 24px;
  height: 24px;
  display: flex;
  align-items: center;
  justify-content: center;
  border-radius: 3px;
  background-color: #494949;
  color: #c8c8c8;
  font-weight: bold;
  font-size: 18px;
}

.flip-on {
  background-color: #07a4bc;
  color: #000;
}

.flip-x {
  transform: scaleX(-1);
}

.flip-xy {
  transform: scale(-1, -1);
}

.flip-y {
  transform: scaleY(-1);
}

.check {
  width: 22px;
  height: 22px;
  flex: none;
  background-color: #494949;
  border-radius: 4px;
}

.check-on {
  background-color: #07a4bc;
}

.btn-reset {
  width: 296px;
  height: 28px;
  margin-left: auto;
}

.btn-warp {
  width: 284px;
  height: 28px;
  margin-left: auto;
}

.mask-top {
  display: flex;
  height: 200px;
}

.mask-tools {
  width: 64px;
  flex: none;
  padding-left: 16px;
}

.mask-icon {
  width: 43px;
  height: 46px;
}

.mask-box {
  flex: 1;
  background-color: #1f1f1f;
}

.btn-invert {
  width: 344px;
  height: 28px;
  margin-top: 8px;
  margin-left: 144px;
  background-color: #3a3a3a;
  color: #777;
}

.row-dim .lbl {
  color: #777;
}

/* views */
.views {
  height: 1196px;
  flex: none;
  display: flex;
  gap: 8px;
  padding-right: 2px;
  background-color: #2d2d2d;
}

.view {
  display: flex;
  flex-direction: column;
}

.view-a {
  width: 198px;
}

.view-b {
  width: 630px;
}

.view-head {
  height: 40px;
  flex: none;
  display: flex;
  align-items: center;
  gap: 18px;
  padding-left: 12px;
  background-color: #383838;
}

.vh-icon {
  width: 16px;
  height: 16px;
}

.vh-gear {
  width: 22px;
  height: 22px;
  margin-left: auto;
  margin-right: 14px;
  color: #8c8c8c;
}

.canvas {
  display: block;
  flex: 1;
  width: 100%;
  min-height: 0;
  background-color: #000;
}

.master {
  width: 148px;
  height: 32px;
  display: flex;
  align-items: center;
  padding: 0 8px 0 14px;
  background-color: #7a7a7a;
  color: #111;
}

.master-add {
  width: 86px;
  height: 32px;
  margin-left: -4px;
  background-color: #7a7a7a;
  color: #111;
  font-size: 21px;
}

/* fixture editor */
.editor {
  flex: 1;
  min-height: 0;
  display: flex;
  flex-direction: column;
  background-color: #2d2d2d;
}

.editor-head {
  height: 48px;
  flex: none;
  display: flex;
  align-items: center;
  padding-left: 10px;
  margin-top: 8px;
  background-color: #1e1e1e;
}

.fold-btn {
  width: 28px;
  height: 28px;
  display: flex;
  align-items: center;
  justify-content: center;
  background-color: #494949;
  border-radius: 50%;
}

.fold-btn .caret {
  margin-left: 0;
  border-left-width: 7px;
  border-right-width: 7px;
  border-top-width: 6px;
}

.combo-editor {
  flex: none;
  width: 214px;
  height: 40px;
  margin-left: 12px;
  padding: 0 4px 0 20px;
}

.combo-editor .caret {
  border-left-width: 8px;
  border-right-width: 8px;
  border-top-width: 7px;
  margin-right: 6px;
}

.detach-btn {
  width: 40px;
  height: 40px;
  margin-left: 12px;
}

.editor-body {
  flex: 1;
  min-height: 0;
  display: flex;
}

.fixtures {
  width: 346px;
  flex: none;
  padding-top: 18px;
}

.tabs {
  display: flex;
  height: 30px;
  margin-left: 10px;
}

.tab {
  width: 168px;
  display: flex;
  align-items: center;
  justify-content: center;
  background-color: #494949;
}

.tab-on {
  padding-left: 30px;
  background-color: #07a4bc;
  color: #111;
}

.tab-fav {
  padding-left: 32px;
}

.fixture-main {
  height: 516px;
  margin-top: 18px;
  display: flex;
}

.fixture-side {
  width: 56px;
  flex: none;
  padding-left: 8px;
}

.add-btn {
  width: 40px;
  height: 40px;
}

.folder-add {
  width: 44px;
  height: 46px;
  margin-top: 12px;
}

.fixture-list {
  width: 290px;
  flex: none;
  display: grid;
  grid-template-columns: 266px 24px;
  grid-template-rows: 492px 24px;
  background-color: #1b1b1b;
}

.fixture-rows {
  overflow: hidden;
}

.fx-item {
  height: 44px;
  margin-bottom: 2px;
  margin-left: 66px;
  display: flex;
  align-items: center;
  padding-left: 8px;
  background-color: #494949;
  font-weight: bold;
  font-size: 22px;
  overflow: hidden;
}

.fx-item span {
  flex: 1;
  min-width: 0;
  overflow: hidden;
  white-space: nowrap;
}

.fx-on {
  background-color: #07a4bc;
  color: #000;
}

.fx-group {
  margin-left: 0;
  padding-left: 8px;
}

.star {
  width: 18px;
  height: 32px;
  flex: none;
  margin-left: 8px;
}

.fixture-vscroll {
  padding: 74px 4px 0;
}

.fixture-vscroll .pill {
  height: 172px;
}

.fixture-hscroll {
  grid-column: 1 / span 2;
  padding: 4px 48px 0 4px;
}

.fixture-hscroll .pill {
  height: 14px;
  background-color: #494949;
}

.import-bar {
  height: 40px;
  margin-top: 8px;
  display: flex;
  align-items: center;
  justify-content: space-between;
  padding: 0 20px 0 64px;
  background-color: #494949;
}

.fixture-props {
  width: 352px;
  flex: none;
  margin: 8px 0 8px 8px;
  padding: 8px 0 0 8px;
  background-color: #1e1e1e;
  overflow: hidden;
}

.prop-sec {
  background-color: #2b2b2b;
}

.prop-pixels {
  height: 128px;
  padding-top: 8px;
}

.prop-row {
  display: flex;
  align-items: center;
  gap: 8px;
  white-space: nowrap;
}

.prop-lbl {
  width: 184px;
  flex: none;
  padding-right: 1px;
  text-align: right;
}

.spin-small {
  width: 80px;
}

.prop-type {
  margin-top: 8px;
}

.combo-type {
  flex: none;
  width: 170px;
  padding-left: 14px;
}

.prop-size {
  margin-top: 8px;
}

.prop-assign {
  height: 326px;
  margin-top: 8px;
  padding-top: 8px;
}

.assign {
  display: flex;
  width: 344px;
  overflow: hidden;
}

.assign-lbl {
  width: 177px;
  padding-top: 9px;
}

.assign-grid {
  display: grid;
  grid-template-columns: 50px 50px 50px;
  grid-auto-rows: 50px;
  gap: 8px 12px;
  margin-left: 19px;
  flex: none;
}

.assign-btn {
  width: 50px;
  height: 50px;
  color: #cfcfcf;
  background:
    linear-gradient(#2b2b2b, #2b2b2b) 50% 0 / 2px 100% no-repeat,
    linear-gradient(#2b2b2b, #2b2b2b) 0 50% / 100% 2px no-repeat,
    #494949;
}

.assign-on {
  color: #000;
  background:
    linear-gradient(#2b2b2b, #2b2b2b) 50% 0 / 2px 100% no-repeat,
    linear-gradient(#2b2b2b, #2b2b2b) 0 50% / 100% 2px no-repeat,
    #07a4bc;
}

.btn-clear {
  width: 120px;
  height: 34px;
  margin: 10px 0 0 192px;
}

.skip-row {
  display: flex;
  align-items: center;
  gap: 8px;
  margin-top: 16px;
  padding-left: 8px;
  white-space: nowrap;
}

.universes {
  flex: 1;
  min-width: 0;
  display: flex;
  flex-direction: column;
  margin-left: 5px;
  margin-top: 8px;
  margin-bottom: 8px;
  background-color: #1b1b1b;
}

.universe-cols {
  flex: 1;
  min-height: 0;
  display: flex;
}

.universe {
  width: 54px;
  flex: none;
  display: flex;
  align-items: center;
  justify-content: center;
  padding-top: 26px;
  border-right: 2px solid #242424;
  font-size: 14px;
}

.universe-last {
  flex: 1;
  border-right: none;
}

.universe-scroll {
  height: 25px;
  flex: none;
  padding: 5px 0 0 3px;
}

.universe-scroll .pill {
  width: 40px;
  height: 16px;
  background-color: #494949;
}

/* media panel */
.media {
  height: 892px;
  flex: none;
  display: flex;
  flex-direction: column;
}

.media-head {
  height: 40px;
  flex: none;
  display: flex;
  align-items: center;
  gap: 14px;
  padding-left: 14px;
  background-color: #383838;
}

.size-chip {
  background-color: #c4c4c4;
}

.size-s {
  width: 8px;
  height: 8px;
  margin-left: auto;
}

.size-m {
  width: 13px;
  height: 13px;
  margin-left: 7px;
  background-color: #07a4bc;
}

.size-l {
  width: 20px;
  height: 20px;
  margin-left: 7px;
  margin-right: 19px;
}

.media-body {
  flex: 1;
  min-height: 0;
  display: flex;
  background-color: #1b1b1b;
}

.media-scroll-area {
  width: 520px;
  flex: none;
  padding-left: 8px;
  overflow: hidden;
}

.media-scroll {
  padding-top: 559px;
  width: 16px;
  margin-left: -4px;
}

.media-scroll .pill {
  width: 16px;
  height: 129px;
  background-color: #333;
}

.thumbs {
  display: grid;
  grid-template-columns: repeat(3, 162px);
  grid-auto-rows: 120px;
  gap: 8px;
  margin-top: -8px;
}

.thumb {
  display: flex;
  flex-direction: column;
  background-color: #000;
  overflow: hidden;
}

.thumb-top {
  flex: 1;
  min-height: 0;
  display: flex;
  align-items: flex-start;
  padding: 4px 5px 0 4px;
}

.thumb-back {
  width: 33px;
  height: 33px;
  flex: none;
  padding-top: 0;
  background-color: #494949;
  border-radius: 3px;
  border: 1px solid #2a2a2a;
}

.thumb-back svg {
  width: 31px;
  height: 31px;
}

.thumb-bar {
  width: 14px;
  height: 91px;
  flex: none;
  margin: 10px 0 0 6px;
  background: linear-gradient(#fff 82px, #808080 82px);
}

.thumb-count {
  width: 42px;
  height: 30px;
  flex: none;
  margin-left: auto;
  margin-top: 1px;
  display: flex;
  align-items: center;
  justify-content: center;
  border-radius: 15px;
  background-color: #e4e4e4;
  color: #222;
  font-size: 20px;
}

.thumb-label {
  height: 24px;
  flex: none;
  padding-left: 4px;
  display: flex;
  align-items: center;
  color: #fff;
  white-space: nowrap;
  font-size: 19.500px;
}

.thumb-on {
  background-color: transparent;
}

.thumb-on .thumb-top {
  background-color: #000;
  margin-bottom: 4px;
  overflow: hidden;
}

.thumb-on .thumb-bar {
  background: #808080;
}

.thumb-on .thumb-label {
  background-color: #07a4bc;
  color: #111;
}

.thumb-add {
  align-items: center;
  justify-content: center;
  background-color: #232323;
}

.fold-images {
  height: 52px;
  padding-left: 0;
  gap: 6px;
}

.folders {
  display: grid;
  grid-template-columns: repeat(3, 162px);
  gap: 8px;
}

.folders i {
  height: 48px;
  background-color: #232323;
}

.folders .folder-last {
  background: linear-gradient(#eee, #eee) 50% 100% / 3px 2px no-repeat, #232323;
}

.media-strip {
  height: 16px;
  flex: none;
  background: linear-gradient(#2d2d2d 7px, #1b1b1b 7px);
}

.props {
  flex: 1;
  min-height: 0;
  display: flex;
  flex-direction: column;
  gap: 4px;
  padding: 0 5px 0 4px;
  background-color: #1b1b1b;
}

.pv-sec {
  height: 58px;
  display: flex;
  align-items: center;
  gap: 8px;
  padding: 0 12px;
}

.combo-thumb {
  flex: none;
  width: 200px;
  height: 34px;
  margin-left: auto;
  padding: 0 8px 0 48px;
}

.info-sec {
  height: 203px;
  padding-top: 16px;
  display: flex;
  flex-direction: column;
  gap: 6px;
}

.info-row {
  height: 30px;
  flex: none;
  display: flex;
  align-items: center;
  gap: 8px;
}

.info-row .lbl {
  width: 152px;
}

.info-res {
  margin-top: 4px;
  margin-bottom: 2px;
}

.info-btn {
  width: 28px;
  height: 28px;
  margin-left: auto;
  margin-right: 17px;
  display: flex;
  align-items: center;
  justify-content: center;
  border-radius: 50%;
  background-color: #494949;
  font-weight: bold;
  color: #c8c8c8;
}

.play-sec {
  height: 132px;
  padding: 14px 12px 0 0;
}

.play-sec .lbl {
  width: 145px;
}

.play-sec .row {
  gap: 6px;
}

.play-sec .lbl {
  margin-right: 3px;
}

.row-mode {
  margin-top: 14px;
}

.play-btn {
  width: 40px;
  height: 40px;
  display: flex;
  align-items: center;
  justify-content: center;
  background-color: #494949;
  border-radius: 4px;
}

.play-on {
  background-color: #07a4bc;
}

.play-right {
  margin-left: auto;
  display: flex;
  gap: 6px;
}

.bracket {
  font-size: 18px;
  color: #c8c8c8;
}

.time-sec {
  height: 238px;
  padding: 12px 12px 0 0;
}

.time-sec .lbl {
  width: 144px;
}

.row-loop .slider {
  height: 36px;
}

.slider-loop {
  gap: 3px;
}

.val-start {
  width: 79px;
}

.loop-in,
.loop-out {
  position: absolute;
  width: 0;
  height: 0;
  border-left: 5px solid transparent;
  border-right: 5px solid transparent;
}

.loop-in {
  top: 0;
  left: -5px;
  border-top: 6px solid #e4e4e4;
}

.loop-out {
  bottom: 0;
  right: -5px;
  border-bottom: 6px solid #e4e4e4;
}

.row-audio {
  margin-top: 28px;
}

.row-audio .lbl {
  display: flex;
  align-items: center;
  justify-content: flex-end;
  gap: 8px;
  padding-right: 2px;
}

.link-row {
  display: flex;
  align-items: center;
  gap: 9px;
  margin-top: 12px;
  padding-left: 54px;
}

.hw-sec {
  height: 102px;
  padding: 16px 12px 0;
}

.hw-row {
  display: flex;
  align-items: center;
  gap: 8px;
}

.player-row {
  display: flex;
  gap: 8px;
  margin-top: 24px;
  padding-left: 30px;
}

/* status bar */
.statusbar {
  height: 32px;
  flex: none;
  display: flex;
  justify-content: flex-end;
  align-items: flex-end;
  background-color: #2b2b2b;
}
```
